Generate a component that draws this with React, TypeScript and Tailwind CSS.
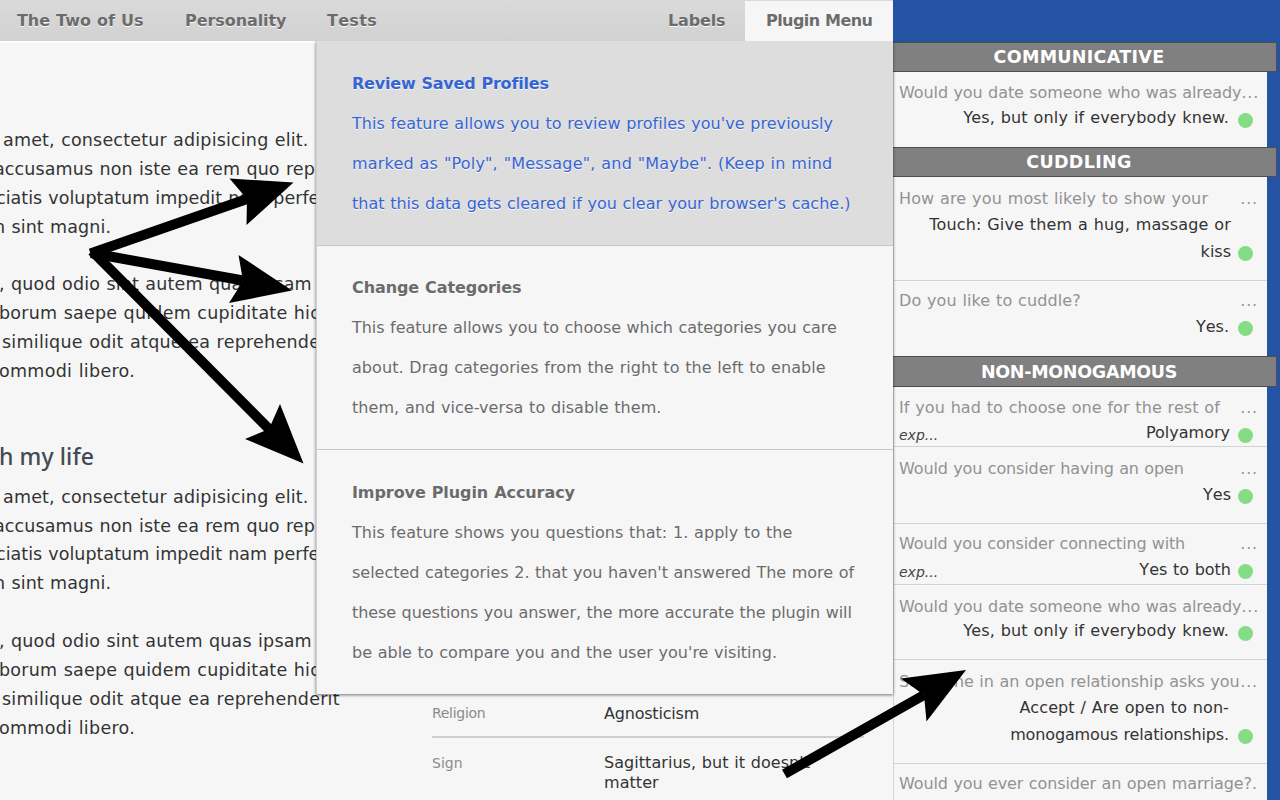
type Line = { text: string; className: string };

type Question = {
  question: string;
  questionClass: string;
  answers: Line[];
  rowClass: string;
  answerClass: string;
  dotClass: string;
  note?: string;
  more?: string;
};

const introLines: Line[] = [
  { text: 'amet, consectetur adipisicing elit.', className: 'ml-[3px] tracking-[0.18px]' },
  { text: 'accusamus non iste ea rem quo reprehenderit', className: '-ml-[6px] tracking-[0.12px]' },
  { text: 'ciatis voluptatum impedit nam perferendis', className: '-ml-[4px] tracking-[0.02px]' },
  { text: 'n sint magni.', className: '-ml-[6px] tracking-[0.12px]' },
];

const detailLines: Line[] = [
  { text: ', quod odio sint autem quas ipsam', className: '-ml-[1px] tracking-[0.18px]' },
  { text: 'borum saepe quidem cupiditate hic', className: '-ml-[1px] tracking-[0.23px]' },
  { text: 'similique odit atque ea reprehenderit', className: 'ml-[2px] tracking-[0.25px]' },
  { text: 'ommodi libero.', className: '-ml-[1px] tracking-[0.3px]' },
];

const menuItems = [
  {
    title: 'Review Saved Profiles',
    titleClass: 'tracking-[-0.2px]',
    itemClass: 'h-[205px] border-b border-[#c8c8c8] bg-[#dddddd] pt-[23px] text-[#3565d3]',
    lines: [
      { text: "This feature allows you to review profiles you've previously", className: 'tracking-[0.05px]' },
      { text: 'marked as "Poly", "Message", and "Maybe". (Keep in mind', className: 'tracking-[0.19px]' },
      { text: "that this data gets cleared if you clear your browser's cache.)", className: 'tracking-[0.006px]' },
    ],
  },
  {
    title: 'Change Categories',
    titleClass: 'tracking-[-0.09px]',
    itemClass: 'h-[204px] border-b border-[#c8c8c8] pt-[22px] text-[#6b6b6b]',
    lines: [
      { text: 'This feature allows you to choose which categories you care', className: 'tracking-[-0.05px]' },
      { text: 'about. Drag categories from the right to the left to enable', className: 'tracking-[0.065px]' },
      { text: 'them, and vice-versa to disable them.', className: 'tracking-[0.06px]' },
    ],
  },
  {
    title: 'Improve Plugin Accuracy',
    titleClass: 'tracking-[-0.08px]',
    itemClass: 'h-[244px] pt-[23px] text-[#6b6b6b]',
    lines: [
      { text: 'This feature shows you questions that: 1. apply to the', className: 'tracking-[0.06px]' },
      { text: "selected categories 2. that you haven't answered The more of", className: 'tracking-[-0.02px]' },
      { text: 'these questions you answer, the more accurate the plugin will', className: 'tracking-[-0.08px]' },
      { text: "be able to compare you and the user you're visiting.", className: 'tracking-[0.01px]' },
    ],
  },
];

const dateQuestion = 'Would you date someone who was already';
const everybodyKnew: Line[] = [
  { text: 'Yes, but only if everybody knew.', className: 'mr-[9px] tracking-[0.168px]' },
];

const categories: { name: string; nameClass: string; questions: Question[] }[] = [
  {
    name: 'COMMUNICATIVE',
    nameClass: 'h-[30px] tracking-[0.3px]',
    questions: [
      {
        question: dateQuestion,
        questionClass: 'tracking-[-0.094px]',
        answers: everybodyKnew,
        rowClass: 'h-[75px] pt-[11px]',
        answerClass: 'mt-px',
        dotClass: 'mb-[3px]',
      },
    ],
  },
  {
    name: 'CUDDLING',
    nameClass: 'h-[30px] tracking-[0.32px]',
    questions: [
      {
        question: 'How are you most likely to show your',
        questionClass: 'tracking-[0.134px]',
        answers: [
          { text: 'Touch: Give them a hug, massage or', className: 'mr-[7px] tracking-[0.147px]' },
          { text: 'kiss', className: 'mr-[7px]' },
        ],
        rowClass: 'h-[104px] border-b pt-[12px]',
        answerClass: 'mt-[2px]',
        dotClass: 'mb-[4px]',
      },
      {
        question: 'Do you like to cuddle?',
        questionClass: 'tracking-[0.1px]',
        answers: [{ text: 'Yes.', className: 'mr-[9px] [font-kerning:none]' }],
        rowClass: 'h-[75px] pt-[10px]',
        answerClass: 'mt-[2px]',
        dotClass: 'mb-[4px]',
      },
    ],
  },
  {
    name: 'NON-MONOGAMOUS',
    nameClass: 'h-[31px] pt-px tracking-[-0.29px]',
    questions: [
      {
        question: 'If you had to choose one for the rest of',
        questionClass: 'tracking-[0.09px]',
        answers: [{ text: 'Polyamory', className: 'mr-[8px]' }],
        rowClass: 'h-[60px] border-b pt-[11px]',
        answerClass: 'mt-[1px]',
        dotClass: 'mb-[3px]',
        note: 'exp...',
      },
      {
        question: 'Would you consider having an open',
        questionClass: 'tracking-[-0.13px]',
        answers: [{ text: 'Yes', className: 'mr-[7px] [font-kerning:none]' }],
        rowClass: 'h-[77px] border-b pt-3',
        answerClass: 'mt-[2px]',
        dotClass: 'mb-[4px]',
      },
      {
        question: 'Would you consider connecting with',
        questionClass: 'tracking-[-0.17px]',
        answers: [{ text: 'Yes to both', className: 'mr-[7px] [font-kerning:none]' }],
        rowClass: 'h-[61px] border-b pt-[10px]',
        answerClass: 'mt-[2px]',
        dotClass: 'mb-[4px]',
        note: 'exp...',
      },
      {
        question: dateQuestion,
        questionClass: 'tracking-[-0.094px]',
        answers: everybodyKnew,
        rowClass: 'h-[75px] border-b pt-3',
        answerClass: '',
        dotClass: 'mb-[3px]',
      },
      {
        question: 'Someone in an open relationship asks you',
        questionClass: 'tracking-[-0.05px]',
        answers: [
          { text: 'Accept / Are open to non-', className: 'mr-[9px] tracking-[0.1px]' },
          { text: 'monogamous relationships.', className: 'mr-[9px] tracking-[-0.134px]' },
        ],
        rowClass: 'h-[104px] border-b pt-3',
        answerClass: 'mt-[2px]',
        dotClass: 'mb-[4px]',
      },
      {
        question: 'Would you ever consider an open marriage?',
        questionClass: 'tracking-[-0.107px]',
        answers: [],
        rowClass: 'h-[60px] pt-[10px]',
        answerClass: '',
        dotClass: '',
        more: '.',
      },
    ],
  },
];

function Nav() {
  return (
    <nav className="flex h-[41px] items-stretch bg-linear-to-b from-[#dadada] to-[#d1d1d1] text-[16px] leading-[42px] font-bold text-[#6c6c6c] [text-shadow:0_1px_0_rgba(255,255,255,0.85)]">
      <a className="ml-[17px] w-[168px] tracking-[-0.04px]">The Two of Us</a>
      <a className="w-[142px] tracking-[-0.07px]">Personality</a>
      <a className="tracking-[0.3px] [font-kerning:none]">Tests</a>
      <a className="ml-auto w-[77px] tracking-[-0.15px]">Labels</a>
      <a className="mt-px w-[148px] bg-[#f6f6f6] pl-[21px] leading-[40px] tracking-[-0.56px]">Plugin Menu</a>
    </nav>
  );
}

function Paragraph({ lines }: { lines: Line[] }) {
  return (
    <div className="text-[17.5px] leading-[28.85px]">
      {lines.map((line) => (
        <p key={line.text} className={line.className}>
          {line.text}
        </p>
      ))}
    </div>
  );
}

function PluginMenu() {
  return (
    <div className="absolute top-[41px] left-[316px] w-[577px] border-l border-[#cfcfcf] bg-[#f6f6f6] shadow-[0_1px_3px_rgba(0,0,0,0.55)] [clip-path:inset(0_-6px_-6px_-6px)]">
      {menuItems.map((item) => (
        <section key={item.title} className={`pl-[35px] text-[16px] leading-[40px] [text-shadow:0_1px_0_rgba(255,255,255,0.85)] ${item.itemClass}`}>
          <h3 className={`font-bold ${item.titleClass}`}>{item.title}</h3>
          {item.lines.map((line) => (
            <p key={line.text} className={line.className}>
              {line.text}
            </p>
          ))}
        </section>
      ))}
    </div>
  );
}

function QuestionRow({ item }: { item: Question }) {
  return (
    <article className={`w-[374px] border-l border-[#d3d3d3] bg-[#f6f6f6] pr-[9px] pl-[5px] ${item.rowClass}`}>
      <div className="flex h-5 justify-between text-[16px] leading-[20px] text-[#929292]">
        <span className={item.questionClass}>{item.question}</span>
        <span className="tracking-[0.8px]">{item.more ?? '...'}</span>
      </div>
      {item.answers.length > 0 && (
        <div className={`flex items-end pr-[5px] ${item.answerClass}`}>
          {item.note && <span className="text-[14px] leading-[22px] text-[#444] italic">{item.note}</span>}
          <div className="ml-auto text-right text-[16px] leading-[27px] text-[#333]">
            {item.answers.map((line) => (
              <p key={line.text} className={line.className}>
                {line.text}
              </p>
            ))}
          </div>
          <span className={`size-[15px] rounded-full bg-[#84dc84] ${item.dotClass}`} />
        </div>
      )}
    </article>
  );
}

function Arrows() {
  return (
    <svg className="pointer-events-none absolute inset-0" width="1280" height="800" viewBox="0 0 1280 800">
      <g stroke="#000" strokeWidth="10">
        <path d="M90.5 253.500 247 199" />
        <path d="M91 253 243 280.500" />
        <path d="M92 251 269 429" />
        <path d="M784.500 774 924 695" />
      </g>
      <path d="M229.500 178.500 293.500 182.500 246.500 225 247 199Z" />
      <path d="M238.500 255 292 290.500 229 303 243 281Z" />
      <path d="M280 404 303.500 463.500 245 439 269 429Z" />
      <path d="M901 678.500 966 670 926.500 721.500 924 695Z" />
    </svg>
  );
}

export default function App() {
  return (
    <div className="relative flex h-[800px] w-[1280px] overflow-hidden bg-[#2453a4] font-['DejaVu_Sans',sans-serif] whitespace-nowrap [word-spacing:0.54px]">
      <div className="flex w-[893px] shrink-0 flex-col bg-[#f6f6f6] text-[#333]">
        <Nav />
        <div className="flex border-t-2 border-white">
          <div className="w-[432px] shrink-0 pt-[83px]">
            <Paragraph lines={introLines} />
            <div className="h-[29px]" />
            <Paragraph lines={detailLines} />
            <h2 className="-ml-px flex h-[97px] items-end pb-[11px] font-['Noto_Sans',sans-serif] text-[23px] leading-[32px] font-medium tracking-[0.1px] text-[#444a55] [word-spacing:0]">h my life</h2>
            <Paragraph lines={introLines} />
            <div className="h-[29px]" />
            <Paragraph lines={detailLines} />
          </div>
          <dl className="mt-[645px] grid w-[432px] auto-rows-min grid-cols-[172px_1fr] text-[16px] leading-[20px]">
            <dt className="h-[50px] border-b-2 border-[#cfcfcf] pt-[15px] text-[14px] tracking-[-0.3px] text-[#8b8b8b]">Religion</dt>
            <dd className="border-b-2 border-[#cfcfcf] pt-4 tracking-[-0.2px]">Agnosticism</dd>
            <dt className="pt-[15px] text-[14px] text-[#8b8b8b]">Sign</dt>
            <dd className="pt-[15px] tracking-[0.053px]">
              Sagittarius, but it doesn't
              <br />
              matter
            </dd>
          </dl>
        </div>
      </div>
      <aside className="flex w-[384px] flex-col pt-[42px]">
        {categories.map((category) => (
          <section key={category.name}>
            <h2 className={`border border-l-0 border-[#4e4e4e] bg-[#808080] pr-[11px] text-center text-[17.5px] leading-[28px] font-bold text-white ${category.nameClass}`}>
              {category.name}
            </h2>
            {category.questions.map((item) => (
              <QuestionRow key={item.question} item={item} />
            ))}
          </section>
        ))}
      </aside>
      <PluginMenu />
      <Arrows />
    </div>
  );
}
